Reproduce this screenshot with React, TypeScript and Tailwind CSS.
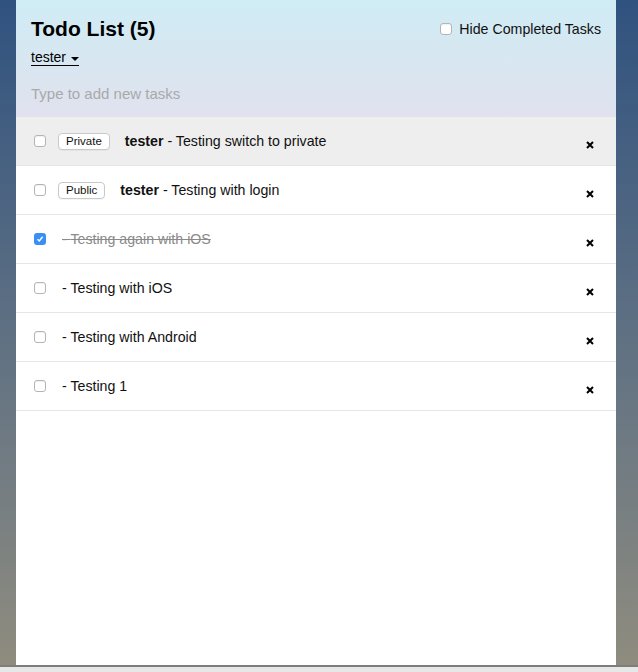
import React from 'react';

type Task = {
  id: number;
  text: string;
  owner?: string;
  privacy?: 'Private' | 'Public';
  checked?: boolean;
  highlight?: boolean;
};

const tasks: Task[] = [
  { id: 1, owner: 'tester', text: 'Testing switch to private', privacy: 'Private', highlight: true },
  { id: 2, owner: 'tester', text: 'Testing with login', privacy: 'Public' },
  { id: 3, text: 'Testing again with iOS', checked: true },
  { id: 4, text: 'Testing with iOS' },
  { id: 5, text: 'Testing with Android' },
  { id: 6, text: 'Testing 1' },
];

const Box = ({ checked = false }: { checked?: boolean }) =>
  checked ? (
    <span className="flex h-3 w-3 shrink-0 items-center justify-center rounded-[3px] bg-[#3b8ef5]">
      <svg width="8" height="8" viewBox="0 0 8 8">
        <path d="M1.5 4.2 L3.3 6 L6.6 1.8" fill="none" stroke="white" strokeWidth="1.4" />
      </svg>
    </span>
  ) : (
    <span className="block h-3 w-3 shrink-0 rounded-[3px] border border-[#b4b4b4] bg-white shadow-[inset_0_1px_1px_rgba(0,0,0,0.06)]" />
  );

const TaskRow = ({ task }: { task: Task }) => (
  <li
    className={
      'flex h-[49px] items-center border-b border-[#e6e6e6] pl-[18px] pr-[22px] ' +
      (task.highlight ? 'bg-[#eeeeee]' : 'bg-white')
    }
  >
    <Box checked={task.checked} />
    {task.privacy ? (
      <span className="ml-3 rounded-[4px] border border-[#c9c9c9] bg-white px-[7px] text-[11.5px] leading-[15px] text-[#111] shadow-[0_1px_0_rgba(0,0,0,0.04)]">
        {task.privacy}
      </span>
    ) : null}
    <span
      className={
        'flex-1 text-[14.2px] leading-[20px] -mt-px ' +
        (task.privacy ? 'ml-[15px] ' : 'ml-4 ') +
        (task.checked ? 'text-[#8a8a8a] line-through' : 'text-[#111]')
      }
    >
      {task.owner ? <strong className="font-bold">{task.owner}</strong> : null} - {task.text}
    </span>
    <svg className="mt-[7px] shrink-0" width="8" height="8" viewBox="0 0 8 8">
      <path d="M1 1 L7 7 M7 1 L1 7" stroke="black" strokeWidth="2" />
    </svg>
  </li>
);

export default function App() {
  return (
    <div className="flex h-[672px] flex-col font-['Liberation_Sans',Arial,sans-serif]">
      <div className="flex h-[665px] bg-linear-to-b from-[#30527f] via-[#687683] via-60% to-[#8f8c7e] px-4">
        <div className="flex w-[600px] flex-col bg-white">
          <header className="h-[117px] bg-linear-to-b from-[#cfecf5] to-[#e0e2ee] px-[15px] pt-[17px]">
            <div className="flex items-start justify-between">
              <div>
                <h1 className="text-[21px] font-bold leading-[24px] text-black">Todo List (5)</h1>
                <span className="mt-[9px] inline-flex items-center gap-[5px] border-b border-black text-[14px] leading-[15px] text-black">
                  tester
                  <span className="mt-[2px] h-0 w-0 border-x-[4px] border-t-[4px] border-x-transparent border-t-black" />
                </span>
              </div>
              <label className="mt-[2px] flex items-center gap-[7px] text-[14.2px] leading-[20px] text-[#111]">
                <Box />
                Hide Completed Tasks
              </label>
            </div>
            <input
              className="mt-[15px] block w-full bg-transparent text-[15px] leading-[20px] text-black outline-none placeholder:text-[#a9a9a9]"
              placeholder="Type to add new tasks"
            />
          </header>
          <ul>
            {tasks.map((t) => (
              <TaskRow key={t.id} task={t} />
            ))}
          </ul>
        </div>
      </div>
      <div className="h-[7px] border-t-2 border-[#7d7d7d] bg-[#e7e7e7]" />
    </div>
  );
}
